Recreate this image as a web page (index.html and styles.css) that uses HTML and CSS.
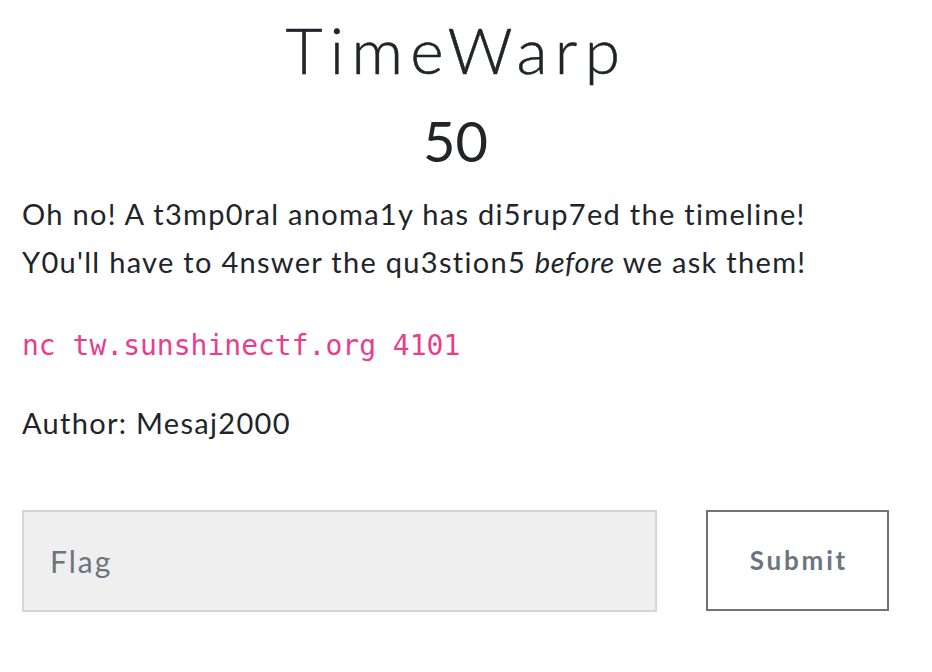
FILE: index.html
```html
<!DOCTYPE html>
<html lang="en">
<head>
<meta charset="utf-8">
<title>TimeWarp</title>
<link rel="stylesheet" href="styles.css">
</head>
<body>
<div class="modal-body">
  <h2 class="challenge-name">TimeWarp</h2>
  <h3 class="challenge-value">50</h3>
  <div class="challenge-desc">
    <p>Oh no! A t3mp0ral anoma1y has di5rup7ed the timeline!<br>Y0u'll have to 4nswer the qu3stion5 <em>before</em> we ask them!</p>
    <p class="cmd"><code>nc tw.sunshinectf.org 4101</code></p>
    <p class="author">Author: Mesaj2000</p>
  </div>
  <form class="submit-row">
    <input class="flag-input" type="text" placeholder="Flag">
    <button class="submit-btn" type="button">Submit</button>
  </form>
</div>
</body>
</html>
```

FILE: styles.css
```css
html, body {
  margin: 0;
  padding: 0;
  background: #ffffff;
}

body {
  font-family: Lato, "Noto Sans", sans-serif;
  color: #212529;
}

.modal-body {
  width: 867px;
  padding: 12px 0 0 22px;
}

.challenge-name {
  margin: 0;
  font-size: 64px;
  font-weight: 300;
  line-height: 1.2;
  text-align: center;
  letter-spacing: 7.3px;
  text-indent: 2px;
  color: #212529;
  -webkit-text-stroke: 0.5px #212529;
}

.challenge-value {
  margin: 18px 0 0;
  font-size: 56px;
  font-weight: 400;
  line-height: 1.2;
  text-align: center;
}

.challenge-desc {
  margin-top: 16px;
  font-size: 29px;
  line-height: 48px;
  letter-spacing: 1.3px;
}

.challenge-desc p {
  margin: 0 0 34px;
}

.challenge-desc em {
  font-style: italic;
  letter-spacing: 0.6px;
}

.challenge-desc .cmd {
  margin-bottom: 29px;
}

.challenge-desc code {
  font-family: "DejaVu Sans Mono", "Liberation Mono", monospace;
  font-size: 28px;
  letter-spacing: 0;
  color: #e83e8c;
}

.challenge-desc .author {
  margin-bottom: 0;
}

.submit-row {
  display: flex;
  gap: 49px;
  margin: 63px 0 0;
}

.flag-input {
  box-sizing: border-box;
  width: 635px;
  height: 102px;
  margin: 0;
  padding: 0 26px;
  border: 2px solid #d2d6dc;
  background: #efefef;
  font-family: Lato, "Noto Sans", sans-serif;
  font-size: 30px;
  letter-spacing: 2px;
  color: #495057;
  outline: none;
}

.flag-input::placeholder {
  color: #6c757d;
}

.submit-btn {
  box-sizing: border-box;
  width: 183px;
  height: 101px;
  margin: 0;
  border: 2px solid #6c757d;
  background: #ffffff;
  font-family: Lato, "Noto Sans", sans-serif;
  font-size: 26px;
  font-weight: 700;
  letter-spacing: 2.8px;
  text-indent: 2.8px;
  color: #6c757d;
  cursor: pointer;
}
```
